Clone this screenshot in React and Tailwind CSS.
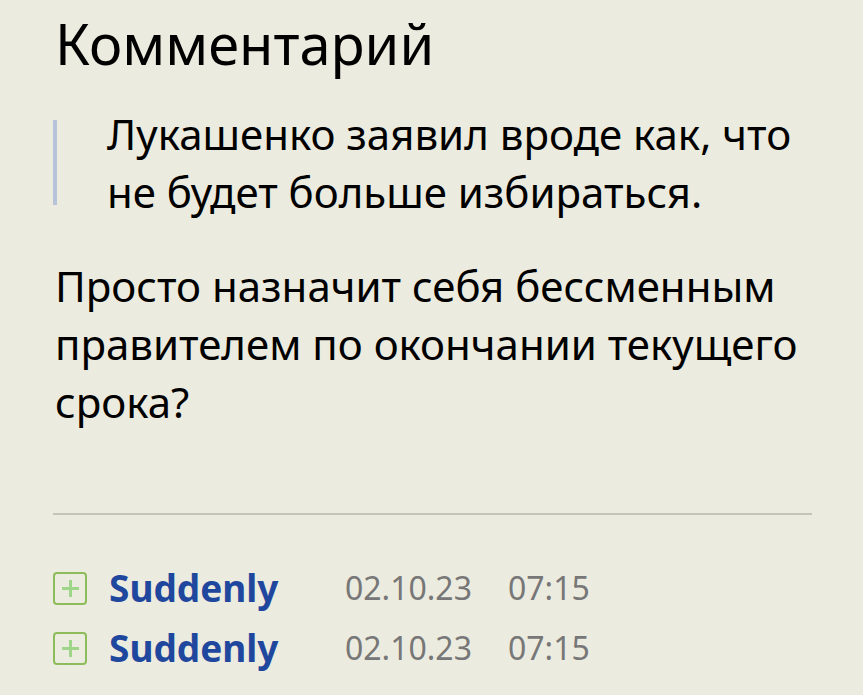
import React from "react";

const Meta = ({ name, date, time }) => {
  return (
    <div className="flex items-center h-[60px]">
      <span className="w-[34px] h-[33px] rounded-[4px] border-2 border-[#8cbd5a] flex items-center justify-center">
        <svg width="21" height="21" viewBox="0 0 21 21">
          <path d="M10.5 2v17M2 10.5h17" stroke="#9ed588" strokeWidth="3" />
        </svg>
      </span>
      <span className="ml-[22px] w-[236px] font-bold text-[#1f479d] text-[37px] leading-[60px]">
        {name}
      </span>
      <span className="text-[#777] text-[32px] leading-[60px]">{date}</span>
      <span className="ml-[36px] text-[#777] text-[32px] leading-[60px]">
        {time}
      </span>
    </div>
  );
};

export default function App() {
  const rows = [
    { name: "Suddenly", date: "02.10.23", time: "07:15" },
    { name: "Suddenly", date: "02.10.23", time: "07:15" },
  ];
  return (
    <div
      className="w-[863px] h-[695px] overflow-hidden bg-[#ecebdf] text-black pl-[53px] pr-[51px] pt-[10px]"
      style={{ fontFamily: '"Noto Sans", sans-serif' }}
    >
      <h1 className="text-[56px] leading-[67px] pl-[2px]">Комментарий</h1>
      <blockquote className="mt-[28px] flex">
        <div className="w-[4px] h-[85px] mt-[15px] bg-[#b6c3d8] shrink-0" />
        <div className="pl-[50px] text-[42px] leading-[58px]">
          Лукашенко заявил вроде как, что не будет больше избираться.
        </div>
      </blockquote>
      <p className="mt-[36px] pl-[2px] text-[42px] leading-[58px]">
        Просто назначит себя бессменным правителем по окончании текущего срока?
      </p>
      <div className="mt-[82px] h-[2px] bg-[#c4c4bb]" />
      <div className="mt-[43px]">
        {rows.map((r, i) => (
          <Meta key={i} {...r} />
        ))}
      </div>
    </div>
  );
}
